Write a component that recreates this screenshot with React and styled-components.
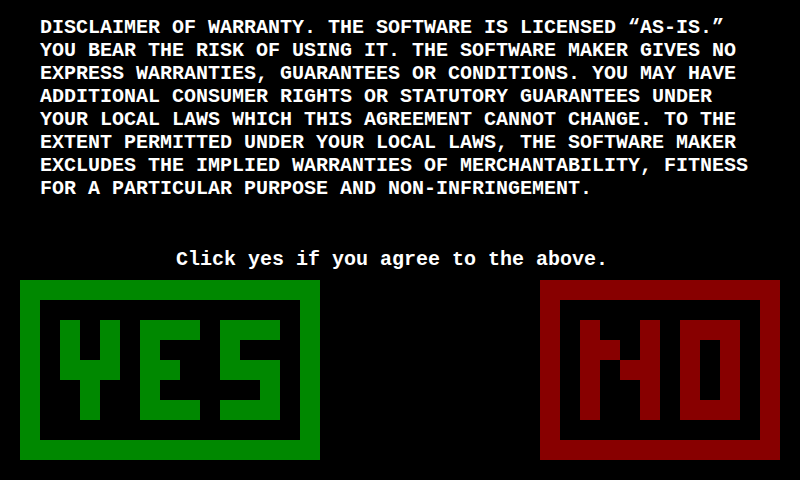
import React from "react";
import styled, { createGlobalStyle } from "styled-components";

const Global = createGlobalStyle`
  html, body { margin: 0; padding: 0; background: #000; }
  body { font-family: "Liberation Mono", "DejaVu Sans Mono", monospace; }
`;

const Screen = styled.div`
  width: 800px;
  height: 480px;
  background: #000;
  color: #fff;
  display: flex;
  flex-direction: column;
  overflow: hidden;
`;

const Disclaimer = styled.p`
  margin: 0;
  padding: 16px 40px 0 40px;
  width: 720px;
  font-size: 20px;
  line-height: 23px;
  font-weight: bold;
`;

const Prompt = styled.div`
  margin-top: 48px;
  padding-right: 16px;
  text-align: center;
  font-size: 20px;
  line-height: 23px;
  font-weight: bold;
`;

const ButtonRow = styled.div`
  margin-top: 9px;
  padding: 0 20px;
  display: flex;
  justify-content: space-between;
  align-items: flex-start;
`;

const PixelButton = styled.button`
  box-sizing: border-box;
  margin: 0;
  padding: 20px;
  border: 20px solid ${(p) => p.$color};
  background: #000;
  cursor: pointer;
  display: block;
`;

const PixelGrid = styled.div`
  display: grid;
  grid-template-columns: repeat(${(p) => p.$cols}, 20px);
  grid-auto-rows: 20px;
`;

const Pixel = styled.span`
  display: block;
  width: 20px;
  height: 20px;
  background: ${(p) => (p.$on ? p.$color : "transparent")};
`;

const YES = [
  "X.X.XXX.XXX",
  "X.X.X...X..",
  "XXX.XX..XXX",
  ".X..X.....X",
  ".X..XXX.XXX",
];

const NO = [
  "X..X.XXX",
  "XX.X.X.X",
  "X.XX.X.X",
  "X..X.X.X",
  "X..X.XXX",
];

function BlockButton({ label, pattern, color }) {
  const cols = pattern[0].length;
  return (
    <PixelButton $color={color} aria-label={label} title={label}>
      <PixelGrid $cols={cols} aria-hidden="true">
        {pattern.flatMap((row, r) =>
          row.split("").map((c, i) => (
            <Pixel key={`${r}-${i}`} $on={c === "X"} $color={color} />
          ))
        )}
      </PixelGrid>
    </PixelButton>
  );
}

export default function App() {
  return (
    <>
      <Global />
      <Screen>
        <Disclaimer>
          DISCLAIMER OF WARRANTY. THE SOFTWARE IS LICENSED “AS-IS.” YOU BEAR
          THE RISK OF USING IT. THE SOFTWARE MAKER GIVES NO EXPRESS WARRANTIES,
          GUARANTEES OR CONDITIONS. YOU MAY HAVE ADDITIONAL CONSUMER RIGHTS OR
          STATUTORY GUARANTEES UNDER YOUR LOCAL LAWS WHICH THIS AGREEMENT CANNOT
          CHANGE. TO THE EXTENT PERMITTED UNDER YOUR LOCAL LAWS, THE SOFTWARE
          MAKER EXCLUDES THE IMPLIED WARRANTIES OF MERCHANTABILITY, FITNESS FOR
          A PARTICULAR PURPOSE AND NON&#8209;INFRINGEMENT.
        </Disclaimer>
        <Prompt>Click yes if you agree to the above.</Prompt>
        <ButtonRow>
          <BlockButton label="YES" pattern={YES} color="#008800" />
          <BlockButton label="NO" pattern={NO} color="#880000" />
        </ButtonRow>
      </Screen>
    </>
  );
}
